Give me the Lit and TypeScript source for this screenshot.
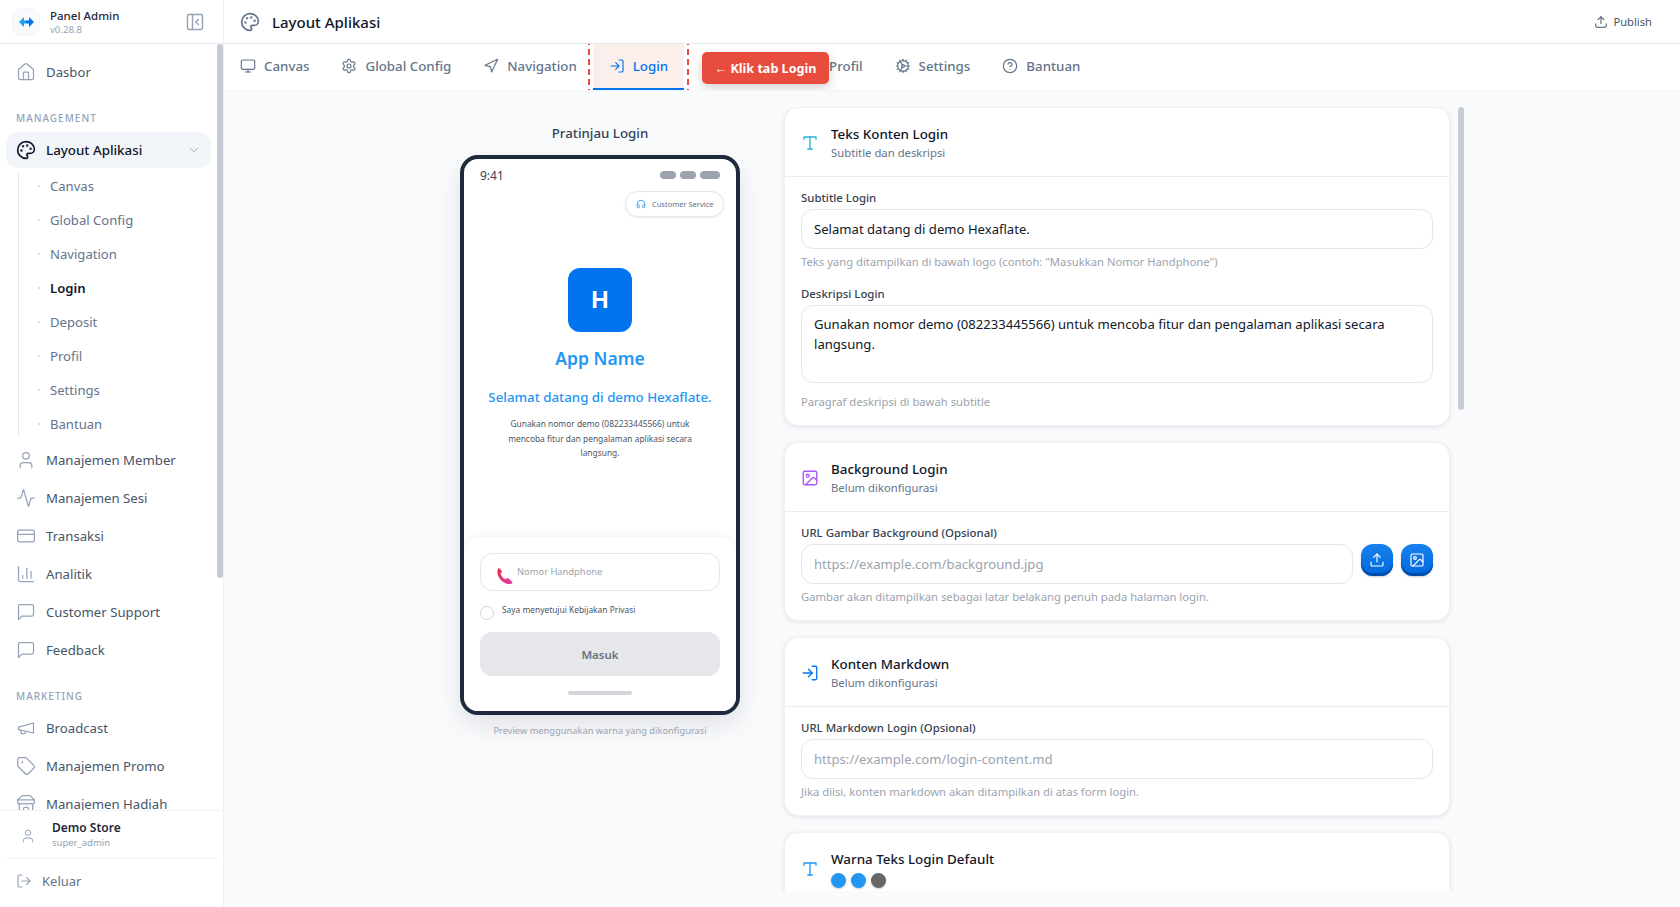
import { LitElement, html, css, svg } from "lit";
import { customElement } from "lit/decorators.js";

const I: Record<string, unknown> = {
  palette: svg`<path d="M12 22a1 1 0 0 1 0-20 10 9 0 0 1 10 9 5 5 0 0 1-5 5h-2.25a1.75 1.75 0 0 0-1.4 2.8l.3.4a1.75 1.75 0 0 1-1.4 2.8z"/><circle cx="13.5" cy="6.5" r=".5" fill="currentColor"/><circle cx="17.5" cy="10.5" r=".5" fill="currentColor"/><circle cx="6.5" cy="12.5" r=".5" fill="currentColor"/><circle cx="8.5" cy="7.5" r=".5" fill="currentColor"/>`,
  panel: svg`<rect x="3" y="3" width="18" height="18" rx="2"/><path d="M9 3v18"/><path d="m16 15-3-3 3-3"/>`,
  home: svg`<path d="M15 21v-8a1 1 0 0 0-1-1h-4a1 1 0 0 0-1 1v8"/><path d="M3 10a2 2 0 0 1 .709-1.528l7-5.999a2 2 0 0 1 2.582 0l7 5.999A2 2 0 0 1 21 10v9a2 2 0 0 1-2 2H5a2 2 0 0 1-2-2z"/>`,
  user: svg`<path d="M19 21v-2a4 4 0 0 0-4-4H9a4 4 0 0 0-4 4v2"/><circle cx="12" cy="7" r="4"/>`,
  activity: svg`<path d="M22 12h-2.48a2 2 0 0 0-1.93 1.46l-2.35 8.36a.25.25 0 0 1-.48 0L9.24 2.18a.25.25 0 0 0-.48 0l-2.35 8.36A2 2 0 0 1 4.49 12H2"/>`,
  card: svg`<rect width="20" height="14" x="2" y="5" rx="2"/><line x1="2" x2="22" y1="10" y2="10"/>`,
  wallet: svg`<path d="M19 7V4a1 1 0 0 0-1-1H5a2 2 0 0 0 0 4h15a1 1 0 0 1 1 1v4h-3a2 2 0 0 0 0 4h3a1 1 0 0 0 1-1v-2a1 1 0 0 0-1-1"/><path d="M3 5v14a2 2 0 0 0 2 2h15a1 1 0 0 0 1-1v-4"/>`,
  chart: svg`<path d="M3 3v16a2 2 0 0 0 2 2h16"/><path d="M18 17V9"/><path d="M13 17V5"/><path d="M8 17v-3"/>`,
  message: svg`<path d="M21 15a2 2 0 0 1-2 2H7l-4 4V5a2 2 0 0 1 2-2h14a2 2 0 0 1 2 2z"/>`,
  megaphone: svg`<path d="m3 11 18-5v12L3 14v-3z"/><path d="M11.6 16.8a3 3 0 1 1-5.8-1.6"/>`,
  tag: svg`<path d="M12.586 2.586A2 2 0 0 0 11.172 2H4a2 2 0 0 0-2 2v7.172a2 2 0 0 0 .586 1.414l8.704 8.704a2.426 2.426 0 0 0 3.42 0l6.58-6.58a2.426 2.426 0 0 0 0-3.42z"/><circle cx="7.5" cy="7.5" r=".5" fill="currentColor"/>`,
  store: svg`<path d="m2 7 4.41-4.41A2 2 0 0 1 7.83 2h8.34a2 2 0 0 1 1.42.59L22 7"/><path d="M4 12v8a2 2 0 0 0 2 2h12a2 2 0 0 0 2-2v-8"/><path d="M15 22v-4a2 2 0 0 0-2-2h-2a2 2 0 0 0-2 2v4"/><path d="M2 7h20"/><path d="M22 7v3a2 2 0 0 1-2 2a2.7 2.7 0 0 1-1.59-.63.7.7 0 0 0-.82 0A2.7 2.7 0 0 1 16 12a2.7 2.7 0 0 1-1.59-.63.7.7 0 0 0-.82 0A2.7 2.7 0 0 1 12 12a2.7 2.7 0 0 1-1.59-.63.7.7 0 0 0-.82 0A2.7 2.7 0 0 1 8 12a2.7 2.7 0 0 1-1.59-.63.7.7 0 0 0-.82 0A2.7 2.7 0 0 1 4 12a2 2 0 0 1-2-2V7"/>`,
  logout: svg`<path d="M9 21H5a2 2 0 0 1-2-2V5a2 2 0 0 1 2-2h4"/><path d="m16 17 5-5-5-5"/><path d="M21 12H9"/>`,
  login: svg`<path d="M15 3h4a2 2 0 0 1 2 2v14a2 2 0 0 1-2 2h-4"/><path d="m10 17 5-5-5-5"/><path d="M15 12H3"/>`,
  monitor: svg`<rect width="20" height="14" x="2" y="3" rx="2"/><line x1="8" x2="16" y1="21" y2="21"/><line x1="12" x2="12" y1="17" y2="21"/>`,
  settings: svg`<path d="M12.22 2h-.44a2 2 0 0 0-2 2v.18a2 2 0 0 1-1 1.73l-.43.25a2 2 0 0 1-2 0l-.15-.08a2 2 0 0 0-2.73.73l-.22.38a2 2 0 0 0 .73 2.73l.15.1a2 2 0 0 1 1 1.72v.51a2 2 0 0 1-1 1.74l-.15.09a2 2 0 0 0-.73 2.73l.22.38a2 2 0 0 0 2.73.73l.15-.08a2 2 0 0 1 2 0l.43.25a2 2 0 0 1 1 1.73V20a2 2 0 0 0 2 2h.44a2 2 0 0 0 2-2v-.18a2 2 0 0 1 1-1.73l.43-.25a2 2 0 0 1 2 0l.15.08a2 2 0 0 0 2.73-.73l.22-.39a2 2 0 0 0-.73-2.73l-.15-.08a2 2 0 0 1-1-1.74v-.5a2 2 0 0 1 1-1.74l.15-.09a2 2 0 0 0 .73-2.73l-.22-.38a2 2 0 0 0-2.73-.73l-.15.08a2 2 0 0 1-2 0l-.43-.25a2 2 0 0 1-1-1.73V4a2 2 0 0 0-2-2z"/><circle cx="12" cy="12" r="3"/>`,
  cog: svg`<path d="M12 20a8 8 0 1 0 0-16 8 8 0 0 0 0 16Z"/><path d="M12 14a2 2 0 1 0 0-4 2 2 0 0 0 0 4Z"/><path d="M12 2v2"/><path d="M12 22v-2"/><path d="m17 20.66-1-1.73"/><path d="M11 10.27 7 3.34"/><path d="m20.66 17-1.73-1"/><path d="m3.34 7 1.73 1"/><path d="M14 12h8"/><path d="M2 12h2"/><path d="m20.66 7-1.73 1"/><path d="m3.34 17 1.73-1"/><path d="m17 3.34-1 1.73"/><path d="m11 13.73-4 6.93"/>`,
  nav: svg`<polygon points="3 11 22 2 13 21 11 13 3 11"/>`,
  help: svg`<circle cx="12" cy="12" r="10"/><path d="M9.09 9a3 3 0 0 1 5.83 1c0 2-3 3-3 3"/><path d="M12 17h.01"/>`,
  chevron: svg`<path d="m6 9 6 6 6-6"/>`,
  upload: svg`<path d="M21 15v4a2 2 0 0 1-2 2H5a2 2 0 0 1-2-2v-4"/><polyline points="17 8 12 3 7 8"/><line x1="12" x2="12" y1="3" y2="15"/>`,
  type: svg`<polyline points="4 7 4 4 20 4 20 7"/><line x1="9" x2="15" y1="20" y2="20"/><line x1="12" x2="12" y1="4" y2="20"/>`,
  image: svg`<rect x="3" y="3" width="18" height="18" rx="2"/><circle cx="9" cy="9" r="2"/><path d="m21 15-3.086-3.086a2 2 0 0 0-2.828 0L6 21"/>`,
  headphones: svg`<path d="M3 14h3a2 2 0 0 1 2 2v3a2 2 0 0 1-2 2H5a2 2 0 0 1-2-2v-7a9 9 0 0 1 18 0v7a2 2 0 0 1-2 2h-1a2 2 0 0 1-2-2v-3a2 2 0 0 1 2-2h3"/>`,
};

const icon = (name: string, cls = "") =>
  html`<svg class="ic ${cls}" viewBox="0 0 24 24" fill="none" stroke="currentColor" stroke-width="2" stroke-linecap="round" stroke-linejoin="round">${I[name]}</svg>`;

const SUB = ["Canvas", "Global Config", "Navigation", "Login", "Deposit", "Profil", "Settings", "Bantuan"];
const MGMT = [
  ["user", "Manajemen Member"],
  ["activity", "Manajemen Sesi"],
  ["card", "Transaksi"],
  ["chart", "Analitik"],
  ["message", "Customer Support"],
  ["message", "Feedback"],
];
const MKT = [
  ["megaphone", "Broadcast"],
  ["tag", "Manajemen Promo"],
  ["store", "Manajemen Hadiah"],
];
const TABS = [
  ["monitor", "Canvas", ""],
  ["settings", "Global Config", ""],
  ["nav", "Navigation", ""],
  ["login", "Login", "on"],
  ["wallet", "Deposit", "dep"],
  ["user", "Profil", ""],
  ["cog", "Settings", ""],
  ["help", "Bantuan", ""],
];

@customElement("app-root")
export class AppRoot extends LitElement {
  static styles = css`
    :host { display: block; height: 907px; overflow: hidden; font-family: "Noto Sans", sans-serif; color: #0f172a; background: #f8fafc; }
    * { box-sizing: border-box; }
    .ic { width: 16px; height: 16px; flex: none; display: block; }
    .app { display: flex; height: 907px; }

    .side { width: 224px; flex: none; background: #fff; border-right: 1px solid #eef1f5; display: flex; flex-direction: column; }
    .brand { height: 44px; flex: none; border-bottom: 1px solid #e9edf2; display: flex; align-items: center; padding: 0 18px 0 12px; }
    .logo { width: 28px; height: 28px; border-radius: 10px; background: #f8fafc; border: 1px solid #f1f5f9; display: flex; align-items: center; justify-content: center; }
    .logo svg { width: 15px; height: 10px; display: block; }
    .brand-text { margin-left: 10px; flex: 1; display: flex; flex-direction: column; }
    .brand-name { font-size: 11.5px; font-weight: 500; line-height: 16px; color: #1e293b; }
    .brand-ver { font-size: 9.6px; line-height: 12px; color: #94a3b8; }
    .collapse { width: 20px; height: 20px; color: #94a3b8; stroke-width: 1.75; }
    .nav { position: relative; flex: 1; min-height: 0; overflow: hidden; padding-top: 10px; }
    .thumb { position: absolute; top: 0; right: 0; width: 6px; background: #c6cbd6; border-radius: 3px; }
    .nav .thumb { height: 534px; }
    .item { height: 36px; margin: 0 0 2px 6px; width: 205px; padding-left: 10px; display: flex; align-items: center; gap: 10px; border-radius: 12px; font-size: 13.2px; color: #475569; flex: none; }
    .item .ic { width: 20px; height: 20px; color: #94a3b8; stroke-width: 1.5; }
    .item.open { background: #f1f5f9; color: #0f172a; font-size: 13.35px; font-weight: 500; margin-bottom: 1px; }
    .item.open .ic { color: #0f172a; stroke-width: 2; }
    .item .chev { width: 14px; height: 14px; margin-left: auto; margin-right: 10px; color: #94a3b8; }
    .item.open .chev { color: #94a3b8; stroke-width: 1.5; }
    .sect { height: 16px; line-height: 16px; margin: 20px 0 6px 16px; font-size: 10px; font-weight: 500; letter-spacing: 1px; color: #94a3b8; }
    .subs { position: relative; margin: 0 0 1px 18px; width: 190px; }
    .subs::before { content: ""; position: absolute; left: 0; top: 4px; bottom: 5px; width: 1px; background: #e2e8f0; }
    .sub { height: 34px; display: flex; align-items: center; font-size: 13.1px; color: #64748b; padding-left: 20px; gap: 10px; }
    .sub::before { content: ""; width: 2px; height: 2px; background: #cbd5e1; border-radius: 50%; flex: none; }
    .sub.on { color: #0f172a; font-weight: 600; }
    .foot { flex: none; background: #fff; border-top: 1px solid #f1f5f9; height: 97px; display: flex; flex-direction: column; }
    .who { height: 47px; display: flex; align-items: center; padding-left: 20px; margin: 0 6px 0 0; }
    .who .ic { width: 16px; height: 16px; color: #94a3b8; stroke-width: 1.5; margin-top: 3px; }
    .who-text { margin-left: 16px; display: flex; flex-direction: column; }
    .who-name { font-size: 12px; font-weight: 600; line-height: 16px; color: #1e293b; }
    .who-role { font-size: 9.5px; line-height: 14px; color: #94a3b8; }
    .sep { height: 1px; background: #f1f5f9; margin: 0 6px; }
    .out { flex: 1; display: flex; align-items: center; padding-left: 16px; gap: 10px; font-size: 13px; color: #64748b; padding-bottom: 5px; }
    .out .ic { color: #94a3b8; stroke-width: 1.75; }

    .main { flex: 1; min-width: 0; display: flex; flex-direction: column; background: #f8fafc; }
    .top { height: 44px; flex: none; background: #fff; border-bottom: 1px solid #e5e7eb; display: flex; align-items: center; padding-left: 16px; }
    .top .pal { width: 20px; height: 20px; color: #64748b; stroke-width: 2; }
    .top h1 { margin: 0 0 0 12px; font-size: 15px; font-weight: 500; color: #0f172a; }
    .pub { margin-left: auto; margin-right: 28px; display: flex; align-items: center; gap: 5px; font-size: 11.2px; color: #475569; }
    .pub .ic { width: 14px; height: 14px; stroke-width: 1.75; }
    .tabs { position: relative; height: 47px; flex: none; background: #fff; border-bottom: 1px solid #f1f5f9; display: flex; overflow: hidden; }
    .tab { display: flex; align-items: center; gap: 8px; padding: 0 16px 2px; font-size: 13.3px; font-weight: 500; color: #64748b; }
    .tab.on { color: #0073ee; background: #fbefec; box-shadow: inset 0 -2px 0 #0073ee; outline: 2px dashed #e74c3c; outline-offset: 3px; }
    .tab.dep { padding: 0 15px 2px 17px; }
    .tab .ic { stroke-width: 1.75; }
    .tip { position: absolute; left: 478px; top: 8px; height: 32px; width: 127px; background: #e74c3c; color: #fff; border-radius: 5px; font-size: 12.6px; font-weight: 700; display: flex; align-items: center; justify-content: center; box-shadow: 0 4px 12px rgba(0,0,0,.18); padding-top: 1px; }

    .content { flex: 1; min-height: 0; display: flex; padding: 16px 0 16px 216px; }
    .prev { width: 320px; flex: none; display: flex; flex-direction: column; align-items: center; margin-right: 24px; padding-top: 16px; }
    .prev h2 { margin: 0; height: 32px; font-size: 13.3px; line-height: 20px; font-weight: 500; color: #334155; }
    .phone { width: 280px; height: 560px; border: 4px solid #1e293b; border-radius: 18px; background: #fff; box-shadow: 0 10px 24px rgba(15,23,42,.1); display: flex; flex-direction: column; overflow: hidden; flex: none; }
    .status { height: 32px; flex: none; display: flex; align-items: center; justify-content: space-between; padding: 0 16px; font-size: 12px; color: #374151; }
    .pills { display: flex; gap: 4px; }
    .pills span { height: 8px; width: 16px; border-radius: 4px; background: #9ca3af; }
    .pills span:last-child { width: 20px; }
    .cs-row { display: flex; justify-content: flex-end; padding: 0 12px; }
    .cs { height: 26px; width: 99px; border: 1px solid #e5e7eb; border-radius: 13px; background: #fff; box-shadow: 0 1px 3px rgba(0,0,0,.08); display: flex; align-items: center; gap: 6px; padding-left: 10px; font-size: 7.5px; color: #6b7280; }
    .cs .ic { width: 10px; height: 10px; color: #2196f3; }
    .hero { display: flex; flex-direction: column; align-items: center; padding-top: 51px; }
    .h-logo { width: 64px; height: 64px; border-radius: 12px; background: #0073ee; color: #fff; font-family: "Liberation Sans", sans-serif; font-size: 24px; font-weight: 700; display: flex; align-items: center; justify-content: center; }
    .app-name { margin-top: 13px; height: 26px; font-size: 17.5px; line-height: 26px; font-weight: 600; color: #2196f3; }
    .app-sub { margin-top: 16px; font-size: 13.3px; line-height: 20px; font-weight: 500; color: #2196f3; }
    .app-desc { margin-top: 10px; width: 190px; text-align: center; font-size: 8.4px; line-height: 14.7px; color: #4b5563; }
    .sheet { margin: auto 0 0; height: 174px; border-radius: 16px 16px 0 0; background: #fff; box-shadow: 0 -2px 8px rgba(0,0,0,.05); padding: 16px 16px 0; display: flex; flex-direction: column; }
    .ph-input { height: 38px; border: 1px solid #e5e7eb; border-radius: 12px; display: flex; align-items: center; padding-left: 16px; gap: 4px; font-size: 9.35px; color: #9ca3af; flex: none; }
    .ph-input svg { width: 16px; height: 16px; margin-top: 8px; flex: none; }
    .ph-input span { margin-top: -2px; }
    .agree { margin-top: 14px; display: flex; gap: 8px; font-size: 8.4px; line-height: 14px; color: #4b5563; height: 27px; }
    .radio { width: 14px; height: 14px; margin-top: 1px; border-radius: 50%; border: 1px solid #d1d5db; flex: none; }
    .agree span { margin-top: -2px; }
    .masuk { height: 44px; flex: none; border-radius: 12px; background: #e5e7eb; color: #6b7280; font-size: 11.5px; font-weight: 600; display: flex; align-items: center; justify-content: center; padding-top: 1px; }
    .bar { width: 64px; height: 4px; border-radius: 2px; background: #d1d5db; margin: 15px auto 0; flex: none; }
    .caption { margin-top: 9px; font-size: 9.3px; line-height: 14px; color: #9ca3af; }

    .scroll { position: relative; width: 683px; margin-left: -3px; flex: none; overflow: hidden; display: flex; flex-direction: column; gap: 16.5px; padding: 0 14px 0 3px; }
    .scroll .thumb { height: 303px; }
    .card { flex: none; background: #fff; border: 1px solid #eef1f5; border-radius: 14px; box-shadow: 0 1px 4px rgba(15,23,42,.1); }
    .c-head { height: 69px; padding: 0 16px; display: flex; align-items: center; gap: 11px; border-bottom: 1px solid #e9edf2; }
    .c-head > .ic { width: 18px; height: 18px; margin-top: 2px; stroke-width: 1.75; }
    .c-text { padding-top: 1px; }
    .c-title { font-size: 13.4px; line-height: 19px; font-weight: 500; color: #0f172a; margin-left: 1px; }
    .c-sub { font-size: 11.3px; line-height: 15px; color: #64748b; margin-left: 1px; margin-top: 1px; }
    .c-body { padding: 13px 16px 0; }
    .b1 { height: 247.5px; }
    .b2 { height: 107.5px; }
    label { display: block; font-size: 11.4px; line-height: 16px; font-weight: 500; color: #374151; height: 19px; }
    input, textarea { display: block; width: 100%; border: 1px solid #e2e8f0; border-radius: 12px; outline: none; font-family: inherit; font-size: 13.1px; color: #111827; padding: 0 12px; background: #fff; }
    input { height: 40px; }
    textarea { height: 78px; padding-top: 8px; line-height: 20px; resize: none; }
    input::placeholder { color: #9ca3af; opacity: 1; }
    .help { font-size: 11.25px; line-height: 15px; color: #9ca3af; margin-top: 5px; }
    .help.wide { margin-top: 11px; }
    .gap { height: 17px; }
    .row { display: flex; gap: 8px; align-items: flex-start; }
    .row input { flex: 1; min-width: 0; }
    .btn { width: 32px; height: 32px; flex: none; border-radius: 12px; background: linear-gradient(#1a80ee, #0069dc); box-shadow: inset 0 -3px 0 #004fa8, 0 1px 2px rgba(0,0,0,.2); color: #fff; display: flex; align-items: center; justify-content: center; }
    .btn .ic { width: 16px; height: 16px; stroke-width: 1.75; }
    .dots { display: flex; gap: 5px; margin: 4px 0 0 1px; }
    .dots span { width: 15px; height: 15px; border-radius: 50%; box-shadow: 0 1px 2px rgba(0,0,0,.2); }
    .c4 .c-head { height: 110px; border-bottom: 0; align-items: flex-start; padding-top: 16px; }
    .c4 .c-head > .ic { margin-top: 11px; }
    .teal { color: #22b8cf; }
    .purple { color: #a855f7; }
    .blue { color: #0073ee; }
    .sky { color: #2196f3; }
  `;

  private head(ic: string, color: string, title: string, sub: string) {
    return html`<div class="c-head">${icon(ic, color)}<div class="c-text"><div class="c-title">${title}</div><div class="c-sub">${sub}</div></div></div>`;
  }

  render() {
    return html`<div class="app">
      <aside class="side">
        <div class="brand">
          <div class="logo"><svg viewBox="0 0 15 10"><path d="M5 0 0 5l5 5V6.5h2v-3H5z" fill="#12a5f4"/><path d="M10 0l5 5-5 5V6.5H7v-3h3z" fill="#0073ee"/></svg></div>
          <div class="brand-text"><span class="brand-name">Panel Admin</span><span class="brand-ver">v0.28.8</span></div>
          ${icon("panel", "collapse")}
        </div>
        <div class="nav">
          <div class="item">${icon("home")}Dasbor</div>
          <div class="sect">MANAGEMENT</div>
          <div class="item open">${icon("palette")}Layout Aplikasi${icon("chevron", "chev")}</div>
          <div class="subs">${SUB.map((s) => html`<div class="sub ${s === "Login" ? "on" : ""}">${s}</div>`)}</div>
          ${MGMT.map(([i, t]) => html`<div class="item">${icon(i)}${t}</div>`)}
          <div class="sect">MARKETING</div>
          ${MKT.map(([i, t]) => html`<div class="item">${icon(i)}${t}</div>`)}
          <div class="thumb"></div>
        </div>
        <div class="foot">
          <div class="who">${icon("user")}<div class="who-text"><span class="who-name">Demo Store</span><span class="who-role">super_admin</span></div></div>
          <div class="sep"></div>
          <div class="out">${icon("logout")}Keluar</div>
        </div>
      </aside>
      <main class="main">
        <div class="top">${icon("palette", "pal")}<h1>Layout Aplikasi</h1><div class="pub">${icon("upload")}Publish</div></div>
        <div class="tabs">
          ${TABS.map(([i, t, c]) => html`<div class="tab ${c}">${icon(i)}${t}</div>`)}
          <div class="tip">← Klik tab Login</div>
        </div>
        <div class="content">
          <section class="prev">
            <h2>Pratinjau Login</h2>
            <div class="phone">
              <div class="status"><span>9:41</span><div class="pills"><span></span><span></span><span></span></div></div>
              <div class="cs-row"><div class="cs">${icon("headphones")}Customer Service</div></div>
              <div class="hero">
                <div class="h-logo">H</div>
                <div class="app-name">App Name</div>
                <div class="app-sub">Selamat datang di demo Hexaflate.</div>
                <div class="app-desc">Gunakan nomor demo (082233445566) untuk mencoba fitur dan pengalaman aplikasi secara langsung.</div>
              </div>
              <div class="sheet">
                <div class="ph-input">
                  <svg viewBox="0.5 0.3 15 15"><defs><linearGradient id="pg" x1="0" y1="0" x2="1" y2="1"><stop offset="0" stop-color="#e6304a"/><stop offset="1" stop-color="#e63ea6"/></linearGradient></defs><path d="M2.6.6 5 3.2c.3.4.3.9 0 1.2L3.9 5.6c.7 2.4 2.4 4.3 4.7 5.3l1.3-1c.4-.3.9-.3 1.2 0l3.6 3.3c.4.4.3 1-.1 1.3-1 .8-2.4 1.3-4 .9C6 14.2 2.2 10.6 1 6 .6 4.3.8 2.5 1.5 1c.2-.6.7-.8 1.1-.4z" fill="url(#pg)"/></svg>
                  <span>Nomor Handphone</span>
                </div>
                <div class="agree"><div class="radio"></div><span>Saya menyetujui Kebijakan Privasi</span></div>
                <div class="masuk">Masuk</div>
                <div class="bar"></div>
              </div>
            </div>
            <div class="caption">Preview menggunakan warna yang dikonfigurasi</div>
          </section>
          <section class="scroll">
            <div class="thumb"></div>
            <div class="card">
              ${this.head("type", "teal", "Teks Konten Login", "Subtitle dan deskripsi")}
              <div class="c-body b1">
                <label>Subtitle Login</label>
                <input value="Selamat datang di demo Hexaflate." />
                <div class="help">Teks yang ditampilkan di bawah logo (contoh: "Masukkan Nomor Handphone")</div>
                <div class="gap"></div>
                <label>Deskripsi Login</label>
                <textarea>Gunakan nomor demo (082233445566) untuk mencoba fitur dan pengalaman aplikasi secara langsung.</textarea>
                <div class="help wide">Paragraf deskripsi di bawah subtitle</div>
              </div>
            </div>
            <div class="card">
              ${this.head("image", "purple", "Background Login", "Belum dikonfigurasi")}
              <div class="c-body b2">
                <label>URL Gambar Background (Opsional)</label>
                <div class="row">
                  <input placeholder="https://example.com/background.jpg" />
                  <div class="btn">${icon("upload")}</div>
                  <div class="btn">${icon("image")}</div>
                </div>
                <div class="help">Gambar akan ditampilkan sebagai latar belakang penuh pada halaman login.</div>
              </div>
            </div>
            <div class="card">
              ${this.head("login", "blue", "Konten Markdown", "Belum dikonfigurasi")}
              <div class="c-body b2">
                <label>URL Markdown Login (Opsional)</label>
                <input placeholder="https://example.com/login-content.md" />
                <div class="help">Jika diisi, konten markdown akan ditampilkan di atas form login.</div>
              </div>
            </div>
            <div class="card c4">
              <div class="c-head">
                ${icon("type", "sky")}
                <div class="c-text"><div class="c-title">Warna Teks Login Default</div><div class="dots"><span style="background:#2196f3"></span><span style="background:#2196f3"></span><span style="background:#666"></span></div></div>
              </div>
            </div>
          </section>
        </div>
      </main>
    </div>`;
  }
}
